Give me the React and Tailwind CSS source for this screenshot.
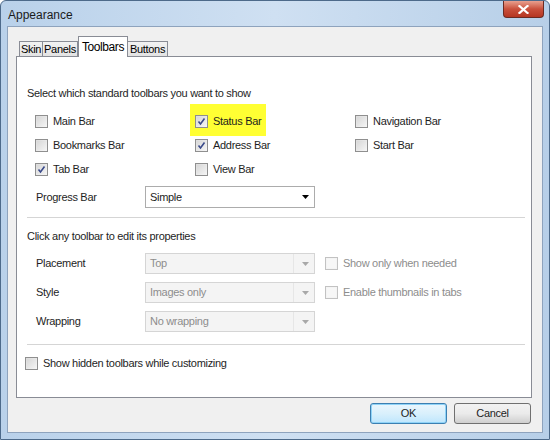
import React from 'react'

const font = { fontFamily: '"Liberation Sans", Arial, sans-serif' }

function CheckMark() {
  return (
    <svg width="9" height="9" viewBox="0 0 9 9" className="absolute left-[1px] top-[1px]">
      <path d="M1.5 4.5 L3.5 7 L7.5 1.5" fill="none" stroke="#3a4a8a" strokeWidth="1.6" />
    </svg>
  )
}

function Checkbox({ checked, disabled, label, h = 'h-[24px]' }) {
  return (
    <label className={`flex items-center gap-[5px] ${h}`}>
      <span
        className={`relative shrink-0 w-[13px] h-[13px] border ${
          disabled ? 'border-[#c2c2c2] bg-[#f4f4f4]' : 'border-[#8f8f8f] bg-gradient-to-br from-[#dcdcdc] to-[#f6f6f6]'
        }`}
      >
        <span className={`absolute inset-[1px] ${disabled ? 'bg-[#f7f7f7]' : 'bg-gradient-to-br from-[#d8d8d8] to-[#f3f3f3]'}`} />
        {checked && <CheckMark />}
      </span>
      <span className={disabled ? 'text-[#8d8d8d]' : 'text-[#1e1e1e]'}>{label}</span>
    </label>
  )
}

function Select({ value, disabled }) {
  return (
    <div
      className={`w-[170px] flex items-center justify-between pl-[4px] pr-[5px] border ${
        disabled ? 'h-[21px] bg-[#f4f4f4] border-[#d5d5d5] text-[#8d8d8d]' : 'h-[22px] bg-white border-[#acacac] text-[#1e1e1e]'
      }`}
    >
      <span>{value}</span>
      <div className="flex items-center h-full">
        {disabled && <div className="w-px h-full bg-[#e6e6e6] mr-[8px]" />}
        <svg width="7" height="4" viewBox="0 0 7 4">
          <path d="M0 0 L7 0 L3.5 4 Z" fill={disabled ? '#a8a8a8' : '#000'} />
        </svg>
      </div>
    </div>
  )
}

export default function App() {
  return (
    <div
      className="w-[550px] h-[440px] flex flex-col text-[11px] tracking-[-0.3px] bg-gradient-to-r from-[#b9d1ea] via-[#cfe0f2] to-[#b7cfe8] border border-[#4d6a8a] rounded-t-[6px] overflow-hidden"
      style={font}
    >
      {/* ── Title bar ── */}
      <div className="h-[25px] flex items-start justify-between pl-[7px]">
        <span className="mt-[5px] text-[12px] tracking-normal text-[#1b1b1b]">Appearance</span>
        <div className="w-[41px] h-[17px] mr-[5px] rounded-b-[4px] border border-[#6b2a22] border-t-0 bg-gradient-to-b from-[#e8a08f] via-[#c9503c] to-[#b53622] flex items-center justify-center">
          <svg width="11" height="9" viewBox="0 0 11 9">
            <path d="M1.5 1 L9.5 8 M9.5 1 L1.5 8" stroke="#fff" strokeWidth="2.2" strokeLinecap="square" />
          </svg>
        </div>
      </div>

      {/* ── Client ── */}
      <div className="flex-1 mx-[6px] mb-[6px] bg-[#f0f0f0] border border-[#8ea3bd] flex flex-col pt-[8px] pl-[8px] pr-[10px]">
        {/* tabs */}
        <div className="flex items-end h-[21px] pl-[3px]">
          <div className="w-[24px] h-[15px] border border-b-0 border-[#898c95] bg-gradient-to-b from-[#f2f2f2] to-[#e3e3e3] flex items-center justify-center">Skin</div>
          <div className="w-[35px] h-[15px] border border-b-0 border-l-0 border-[#898c95] bg-gradient-to-b from-[#f2f2f2] to-[#e3e3e3] flex items-center justify-center">Panels</div>
          <div className="w-[50px] h-[21px] border border-b-0 border-[#898c95] bg-white flex items-center justify-center relative top-px text-[12px] tracking-[-0.4px]">Toolbars</div>
          <div className="w-[40px] h-[15px] border border-b-0 border-l-0 border-[#898c95] bg-gradient-to-b from-[#f2f2f2] to-[#e3e3e3] flex items-center justify-center">Buttons</div>
        </div>

        {/* panel */}
        <div className="h-[342px] bg-white border border-[#898c95] flex flex-col pl-[10px] pr-[6px]">
          <div className="mt-[28px] h-[16px] flex items-center text-[#1e1e1e]">Select which standard toolbars you want to show</div>

          <div className="mt-[8px] pl-[8px] grid grid-cols-[160px_160px_160px]">
            <Checkbox label="Main Bar" />
            <div className="relative">
              <div className="absolute left-[-5px] top-[-5px] w-[76px] h-[32px] bg-[#ffff33]" />
              <div className="relative">
                <Checkbox checked label="Status Bar" />
              </div>
            </div>
            <Checkbox label="Navigation Bar" />
            <Checkbox label="Bookmarks Bar" />
            <Checkbox checked label="Address Bar" />
            <Checkbox label="Start Bar" />
            <Checkbox checked label="Tab Bar" />
            <Checkbox label="View Bar" />
          </div>

          <div className="mt-[5px] pl-[9px] flex items-center">
            <span className="w-[109px] text-[#1e1e1e]">Progress Bar</span>
            <Select value="Simple" />
          </div>

          <div className="mt-[9px] h-px bg-[#d5d5d5]" />

          <div className="mt-[10px] h-[16px] flex items-center text-[#1e1e1e]">Click any toolbar to edit its properties</div>

          <div className="mt-[9px] pl-[9px] flex flex-col gap-[8px]">
            <div className="flex items-center h-[21px]">
              <span className="w-[109px] text-[#1e1e1e]">Placement</span>
              <Select value="Top" disabled />
              <div className="ml-[10px]">
                <Checkbox disabled label="Show only when needed" h="h-[21px]" />
              </div>
            </div>
            <div className="flex items-center h-[21px]">
              <span className="w-[109px] text-[#1e1e1e]">Style</span>
              <Select value="Images only" disabled />
              <div className="ml-[10px]">
                <Checkbox disabled label="Enable thumbnails in tabs" h="h-[21px]" />
              </div>
            </div>
            <div className="flex items-center h-[21px]">
              <span className="w-[109px] text-[#1e1e1e]">Wrapping</span>
              <Select value="No wrapping" disabled />
            </div>
          </div>

          <div className="mt-[12px] h-px bg-[#d5d5d5]" />

          <div className="mt-[6px] -ml-[2px]">
            <Checkbox label="Show hidden toolbars while customizing" />
          </div>
        </div>

        {/* buttons */}
        <div className="mt-[5px] flex justify-end gap-[7px] pr-[1px]">
          <button className="w-[77px] h-[21px] rounded-[3px] border border-[#3c7fb1] bg-gradient-to-b from-[#eaf6fd] via-[#d9f0fc] to-[#bee6fd] shadow-[inset_0_0_0_1px_#8fd3f7] text-[#1e1e1e]">OK</button>
          <button className="w-[77px] h-[21px] rounded-[3px] border border-[#707070] bg-gradient-to-b from-[#f2f2f2] via-[#ebebeb] to-[#cfcfcf] text-[#1e1e1e]">Cancel</button>
        </div>
      </div>
    </div>
  )
}
